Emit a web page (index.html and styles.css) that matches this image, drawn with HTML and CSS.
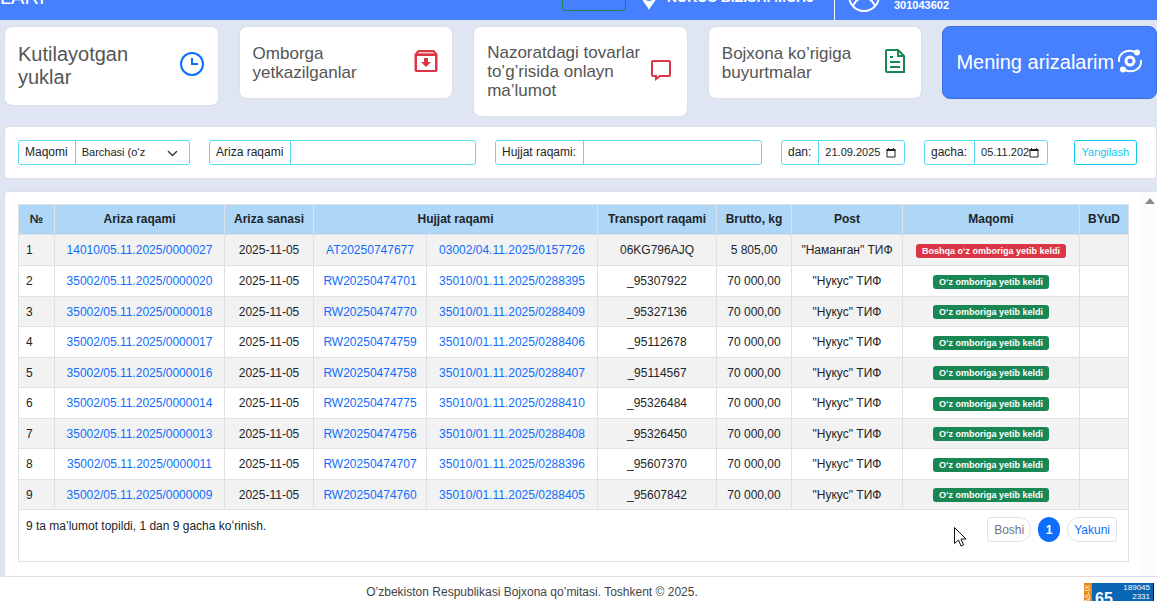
FILE: index.html
```html
<!DOCTYPE html>
<html lang="uz">
<head>
  <meta charset="UTF-8">
  <title>Mening arizalarim</title>
  <link rel="stylesheet" href="styles.css">
</head>
<body>
  <header class="navbar">
    <div class="brand">LARI</div>
    <button class="lang-button" type="button" aria-label="Til"></button>
    <div class="company">
      <svg class="pin" viewBox="0 0 18 24"><path d="M9 24C7 19 1 15 1 9a8 8 0 0 1 16 0c0 6-6 10-8 15z" fill="#fff"/><circle cx="9" cy="11" r="4" fill="#4680ff"/></svg>
      <span>NUKUS BIZISHI MCHJ</span>
    </div>
    <div class="user">
      <svg class="avatar" viewBox="0 0 32 32" fill="none" stroke="#fff" stroke-width="2"><circle cx="16" cy="16" r="15"/><circle cx="16" cy="12" r="6"/><path d="M5 26c2-5 6-8 11-8s9 3 11 8"/></svg>
      <span>301043602</span>
    </div>
  </header>

  <nav class="cards">
    <a class="card card-big" href="#">
      <span>Kutilayotgan yuklar</span>
      <svg class="icon" viewBox="0 0 24 24" fill="none" stroke="#0d6efd" stroke-width="2"><circle cx="12" cy="12" r="11"/><path d="M12 6v6h6" /></svg>
    </a>
    <a class="card" href="#">
      <span>Omborga yetkazilganlar</span>
      <svg class="icon" viewBox="0 0 24 24"><path d="M4 1h16l3.500 4v16a2 2 0 0 1-2 2h-19a2 2 0 0 1-2-2V5z" fill="#dc3545"/><path d="M5 3h14l1.500 1.500h-17z" fill="#f3c2c7"/><path d="M3 7h18v14H3z" fill="#fff"/><path d="M10 9h4v4h3l-5 5-5-5h3z" fill="#dc3545"/></svg>
    </a>
    <a class="card" href="#">
      <span>Nazoratdagi tovarlar to’g’risida onlayn ma’lumot</span>
      <svg class="icon" viewBox="0 0 24 24" fill="none" stroke="#dc3545" stroke-width="2"><path d="M4 3h16a1 1 0 0 1 1 1v13a1 1 0 0 1-1 1h-9l-4 3v-3H4a1 1 0 0 1-1-1V4a1 1 0 0 1 1-1z"/></svg>
    </a>
    <a class="card" href="#">
      <span>Bojxona ko’rigiga buyurtmalar</span>
      <svg class="icon" viewBox="0 0 24 24" fill="none" stroke="#198754" stroke-width="2"><path d="M4 1h11l6 6v16H4a1 1 0 0 1-1-1V2a1 1 0 0 1 1-1z"/><path d="M15 1v6h6M7 8h3M7 13h10M7 18h10"/></svg>
    </a>
    <a class="card card-big active" href="#">
      <span>Mening arizalarim</span>
      <svg class="icon" viewBox="0 0 24 24" fill="none" stroke="#fff" stroke-width="2"><circle cx="12" cy="12" r="4" stroke-width="3"/><path d="M1 13C0 5 8-1 17 3M23 11c1 8-7 14-16 10"/><circle cx="19" cy="3.500" r="3" fill="#fff" stroke="none"/><circle cx="5" cy="20.500" r="3" fill="#fff" stroke="none"/></svg>
    </a>
  </nav>

  <form class="filter">
    <div class="group g-status">
      <label for="status">Maqomi</label>
      <select id="status"><option>Barchasi (oʻz</option></select>
      <svg class="chevron" viewBox="0 0 16 16" fill="none" stroke="#343a40" stroke-width="2" stroke-linecap="round" stroke-linejoin="round"><path d="m2 5 6 6 6-6"/></svg>
    </div>
    <div class="group g-ariza">
      <label for="ariza">Ariza raqami</label>
      <input id="ariza" type="text">
    </div>
    <div class="group g-doc">
      <label for="doc">Hujjat raqami:</label>
      <input id="doc" type="text">
    </div>
    <div class="group g-from">
      <label for="from">dan:</label>
      <input id="from" type="text" value="21.09.2025">
      <svg class="calendar" viewBox="0 0 10 10"><path d="M1 2h8v7H1z" fill="none" stroke="#222"/><path d="M.5 1h9v2h-9zM2 0h1v1H2zM7 0h1v1H7z" fill="#222"/></svg>
    </div>
    <div class="group g-to">
      <label for="to">gacha:</label>
      <input id="to" type="text" value="05.11.2025">
      <svg class="calendar" viewBox="0 0 10 10"><path d="M1 2h8v7H1z" fill="none" stroke="#222"/><path d="M.5 1h9v2h-9zM2 0h1v1H2zM7 0h1v1H7z" fill="#222"/></svg>
    </div>
    <button class="refresh" type="button">Yangilash</button>
  </form>

  <main class="panel">
    <div class="panel-content">
      <table class="list">
        <colgroup>
          <col class="c-no"><col class="c-ariza"><col class="c-date"><col class="c-doc"><col class="c-decl">
          <col class="c-transport"><col class="c-brutto"><col class="c-post"><col class="c-status"><col class="c-byud">
        </colgroup>
        <thead>
          <tr><th>№</th><th>Ariza raqami</th><th>Ariza sanasi</th><th colspan="2">Hujjat raqami</th><th>Transport raqami</th><th>Brutto, kg</th><th>Post</th><th>Maqomi</th><th>BYuD</th></tr>
        </thead>
        <tbody>
          <tr><td>1</td><td><a href="#">14010/05.11.2025/0000027</a></td><td>2025-11-05</td><td><a href="#">AT20250747677</a></td><td><a href="#">03002/04.11.2025/0157726</a></td><td>06KG796AJQ</td><td>5 805,00</td><td>"Наманган" ТИФ</td><td><span class="badge red">Boshqa oʻz omboriga yetib keldi</span></td><td></td></tr>
          <tr><td>2</td><td><a href="#">35002/05.11.2025/0000020</a></td><td>2025-11-05</td><td><a href="#">RW20250474701</a></td><td><a href="#">35010/01.11.2025/0288395</a></td><td>_95307922</td><td>70 000,00</td><td>"Нукус" ТИФ</td><td><span class="badge">Oʻz omboriga yetib keldi</span></td><td></td></tr>
          <tr><td>3</td><td><a href="#">35002/05.11.2025/0000018</a></td><td>2025-11-05</td><td><a href="#">RW20250474770</a></td><td><a href="#">35010/01.11.2025/0288409</a></td><td>_95327136</td><td>70 000,00</td><td>"Нукус" ТИФ</td><td><span class="badge">Oʻz omboriga yetib keldi</span></td><td></td></tr>
          <tr><td>4</td><td><a href="#">35002/05.11.2025/0000017</a></td><td>2025-11-05</td><td><a href="#">RW20250474759</a></td><td><a href="#">35010/01.11.2025/0288406</a></td><td>_95112678</td><td>70 000,00</td><td>"Нукус" ТИФ</td><td><span class="badge">Oʻz omboriga yetib keldi</span></td><td></td></tr>
          <tr><td>5</td><td><a href="#">35002/05.11.2025/0000016</a></td><td>2025-11-05</td><td><a href="#">RW20250474758</a></td><td><a href="#">35010/01.11.2025/0288407</a></td><td>_95114567</td><td>70 000,00</td><td>"Нукус" ТИФ</td><td><span class="badge">Oʻz omboriga yetib keldi</span></td><td></td></tr>
          <tr><td>6</td><td><a href="#">35002/05.11.2025/0000014</a></td><td>2025-11-05</td><td><a href="#">RW20250474775</a></td><td><a href="#">35010/01.11.2025/0288410</a></td><td>_95326484</td><td>70 000,00</td><td>"Нукус" ТИФ</td><td><span class="badge">Oʻz omboriga yetib keldi</span></td><td></td></tr>
          <tr><td>7</td><td><a href="#">35002/05.11.2025/0000013</a></td><td>2025-11-05</td><td><a href="#">RW20250474756</a></td><td><a href="#">35010/01.11.2025/0288408</a></td><td>_95326450</td><td>70 000,00</td><td>"Нукус" ТИФ</td><td><span class="badge">Oʻz omboriga yetib keldi</span></td><td></td></tr>
          <tr><td>8</td><td><a href="#">35002/05.11.2025/0000011</a></td><td>2025-11-05</td><td><a href="#">RW20250474707</a></td><td><a href="#">35010/01.11.2025/0288396</a></td><td>_95607370</td><td>70 000,00</td><td>"Нукус" ТИФ</td><td><span class="badge">Oʻz omboriga yetib keldi</span></td><td></td></tr>
          <tr><td>9</td><td><a href="#">35002/05.11.2025/0000009</a></td><td>2025-11-05</td><td><a href="#">RW20250474760</a></td><td><a href="#">35010/01.11.2025/0288405</a></td><td>_95607842</td><td>70 000,00</td><td>"Нукус" ТИФ</td><td><span class="badge">Oʻz omboriga yetib keldi</span></td><td></td></tr>
        </tbody>
      </table>
      <div class="list-footer">
        <span>9 ta ma’lumot topildi, 1 dan 9 gacha koʻrinish.</span>
        <div class="pages">
          <button class="page first" type="button" disabled>Boshi</button>
          <button class="page current" type="button">1</button>
          <button class="page last" type="button">Yakuni</button>
        </div>
      </div>
    </div>
    <div class="scrollbar"><svg viewBox="0 0 10 6"><path d="M0 6 5 0l5 6z" fill="#8b8b8b"/></svg></div>
  </main>

  <footer class="footer">
    <span>O’zbekiston Respublikasi Bojxona qo’mitasi. Toshkent © 2025.</span>
    <div class="counter">
      <span class="counter-side">TAS-IX</span>
      <span class="counter-main">65</span>
      <span class="counter-nums">189045<br>2331<br>1771</span>
    </div>
  </footer>

  <svg class="cursor" viewBox="0 0 12 20"><path d="M.5.500v16l4-3.500 2.500 6 2.500-1-2.500-6h5z" fill="#fff" stroke="#111"/></svg>
</body>
</html>
```
FILE: styles.css
```css
* {
  box-sizing: border-box;
}
body {
  margin: 0;
  height: 100vh;
  overflow: hidden;
  display: flex;
  flex-direction: column;
  background: #e0e5f3;
  color: #212529;
  font-family: "Liberation Sans", Arial, sans-serif;
  font-size: 12px;
  line-height: 18px;
}
a {
  color: #0d6efd;
  text-decoration: none;
}
button, input, select {
  font: inherit;
  color: inherit;
  margin: 0;
}

/* top bar, scrolled almost out of view */
.navbar {
  height: 20px;
  flex: none;
  overflow: hidden;
  display: flex;
  align-items: flex-end;
  background: #4680ff;
  color: #fff;
}
.brand {
  width: 562px;
  flex: none;
  font-size: 20px;
  line-height: 20px;
  padding-bottom: 13px;
}
.lang-button {
  width: 64px;
  height: 38px;
  flex: none;
  margin-bottom: 9px;
  background: none;
  border: 1px solid #198754;
  border-radius: 4px;
}
.company {
  width: 209px;
  flex: none;
  display: flex;
  align-items: flex-end;
  gap: 9px;
  padding: 0 0 10px 14px;
  font-weight: bold;
  font-size: 14px;
  border-right: 1px solid #fff;
}
.company span {
  padding-bottom: 4px;
}
.pin {
  width: 18px;
  height: 24px;
}
.user {
  display: flex;
  align-items: flex-end;
  gap: 14px;
  padding: 0 0 8px 13px;
  font-size: 11px;
  font-weight: bold;
  line-height: 14px;
}
.avatar {
  width: 32px;
  height: 32px;
}

.cards {
  flex: none;
  height: 106px;
  padding: 6px 0 0 4px;
  display: grid;
  grid-template-columns: repeat(5, 1fr);
  column-gap: 20px;
  align-items: start;
}
.card {
  min-height: 73px;
  display: flex;
  align-items: center;
  justify-content: space-between;
  padding: 16px 14px 16px 13px;
  background: #fff;
  color: #555;
  border: 1px solid #dedfe4;
  border-radius: 8px;
  font-size: 17px;
  line-height: 19px;
}
.card-big {
  font-size: 20px;
  line-height: 23px;
}
.card .icon {
  width: 24px;
  height: 24px;
  margin-bottom: 4px;
  flex: none;
}
.card.active {
  background: #4680ff;
  border-color: #3b6fe0;
  color: #fff;
}

.filter {
  flex: none;
  display: flex;
  align-items: center;
  gap: 19px;
  height: 53px;
  margin-left: 4px;
  padding: 0 13px;
  background: #fff;
  border: 1px solid #dedfe4;
  border-radius: 4px;
}
.group {
  position: relative;
  display: flex;
  height: 25px;
  flex: none;
  border: 1px solid #5bdaf3;
  border-radius: 3px;
}
.group label {
  flex: none;
  padding: 2px 7px 2px 6px;
  line-height: 19px;
  border-right: 1px solid #5bdaf3;
}
.group input, .group select {
  flex: 1;
  min-width: 0;
  padding: 0 6px 2px;
  border: 0;
  background: none;
  outline: 0;
  font-size: 11px;
  appearance: none;
}
.g-status { width: 172px; }
.g-ariza { width: 267px; }
.g-doc { width: 267px; }
.g-from { width: 124px; }
.g-to { width: 124px; }
.chevron {
  position: absolute;
  right: 11px;
  top: 7px;
  width: 11px;
  height: 11px;
  pointer-events: none;
}
.calendar {
  width: 10px;
  height: 10px;
  flex: none;
  margin: 7px 8px 0 0;
}
.group.g-from input, .group.g-to input {
  padding-right: 0;
}
.refresh {
  height: 25px;
  margin-left: auto;
  margin-right: 6px;
  padding: 0 7px 1px;
  background: #fff;
  border: 1px solid #0dcaf0;
  border-radius: 3px;
  color: #0dcaf0;
  font-size: 11px;
}

.panel {
  flex: none;
  display: flex;
  margin: 12px 0 0 4px;
  background: #fff;
  border: 1px solid #dedfe4;
  border-right: 0;
  border-radius: 4px 0 0 0;
}
.panel-content {
  flex: 1;
  min-width: 0;
  padding: 12px 13px 14px;
}
.list {
  width: 100%;
  table-layout: fixed;
  border-collapse: collapse;
  text-align: center;
}
.list th, .list td {
  padding: 0;
  border: 1px solid #dee2e6;
  white-space: nowrap;
}
.list th {
  height: 30px;
  padding-bottom: 2px;
  background: #aed6f6;
}
.list td {
  height: 30px;
}
.list tr:first-child td,
.list tr:nth-child(even) td {
  height: 31px;
}
.list td:first-child {
  padding-left: 7px;
  text-align: left;
}
.list tbody tr:nth-child(odd) {
  background: #f2f2f2;
}
.c-no { width: 36px; }
.c-ariza { width: 170px; }
.c-date { width: 89px; }
.c-doc { width: 113px; }
.c-decl { width: 171px; }
.c-transport { width: 119px; }
.c-brutto { width: 75px; }
.c-post { width: 111px; }
.c-status { width: 177px; }
.c-byud { width: 49px; }
.badge {
  display: inline-block;
  padding: 2px 6px;
  border-radius: 3px;
  background: #198754;
  color: #fff;
  font-size: 9px;
  font-weight: bold;
  line-height: 10px;
  vertical-align: middle;
}
.badge.red {
  background: #dc3545;
}
.list-footer {
  display: flex;
  justify-content: space-between;
  height: 52px;
  padding: 7px 11px 0 7px;
  border: 1px solid #dee2e6;
  border-top: 0;
}
.pages {
  display: flex;
  gap: 7px;
}
.page {
  height: 25px;
  padding: 0 6px;
  background: #fff;
  border: 1px solid #dee2e6;
  border-radius: 4px;
  color: #0d6efd;
}
.page.first {
  color: #6c757d;
  border-radius: 4px 12px 12px 4px;
}
.page.current {
  width: 22px;
  padding: 0;
  background: #0d6efd;
  border-color: #0d6efd;
  border-radius: 12px;
  color: #fff;
  font-weight: bold;
}
.page.last {
  border-radius: 12px 4px 4px 12px;
}
.scrollbar {
  width: 15px;
  flex: none;
  padding: 6px 0 0 3px;
  background: #fcfcfc;
}
.scrollbar svg {
  display: block;
  width: 10px;
  height: 6px;
}

.footer {
  flex: 1;
  position: relative;
  background: #fff;
  padding: 6px 93px 0 0;
  text-align: center;
  color: #444;
}
.counter {
  position: absolute;
  top: 6px;
  right: 3px;
  width: 70px;
  height: 31px;
  display: flex;
  overflow: hidden;
  background: #0866b5;
  border-right: 1px solid #111;
  color: #fff;
}
.counter-side {
  width: 8px;
  padding-bottom: 2px;
  background: #e88a1a;
  writing-mode: vertical-rl;
  transform: rotate(180deg);
  text-align: end;
  font-size: 7px;
  line-height: 8px;
}
.counter-main {
  padding: 7px 0 0 3px;
  font-size: 16px;
  font-weight: bold;
}
.counter-nums {
  margin-left: auto;
  padding-right: 3px;
  text-align: right;
  font-size: 8px;
  line-height: 9px;
}

.cursor {
  position: absolute;
  left: 954px;
  top: 527px;
  width: 12px;
  height: 20px;
}
```
